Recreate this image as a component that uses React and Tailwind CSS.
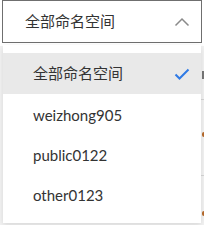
import React from "react";

const font = { fontFamily: 'Lato, "Noto Sans CJK SC", sans-serif' };

export default function App() {
  const items = ["weizhong905", "public0122", "other0123"];
  return (
    <div
      className="relative w-[204px] h-[225px] overflow-hidden bg-[#f3f3f3] text-[#333]"
      style={font}
    >
      {/* background page content peeking out on the right */}
      <div className="absolute right-0 top-[60px] w-[3px] flex flex-col items-end">
        <div className="w-[2px] h-[8px] mt-[11px] bg-[#777]" />
        <div className="w-[3px] h-px mt-[20px] bg-[#d6d6d6]" />
        <div className="w-[2px] h-[5px] mt-[32px] rounded-l-full bg-[#b86a2a]" />
        <div className="w-[3px] h-px mt-[38px] bg-[#d6d6d6]" />
        <div className="w-[2px] h-[5px] mt-[35px] rounded-l-full bg-[#b86a2a]" />
      </div>

      <div className="bg-white pb-[3px]">
        <div className="ml-[2px] w-[200px] h-[43px] border border-[#6f6f6f] bg-white flex items-center justify-between pl-[22px] pr-[11px]">
          <span className="text-[15px] leading-none">全部命名空间</span>
          <svg width="16" height="10" viewBox="0 0 16 10" fill="none">
            <path d="M1.5 8.5L8 2l6.5 6.5" stroke="#8a8a8a" strokeWidth="1.5" />
          </svg>
        </div>
      </div>

      <div className="absolute left-[3px] top-[45px] w-[198px] h-[178px] bg-white shadow-[0_2px_6px_rgba(0,0,0,0.12)] pt-[8px] flex flex-col">
        <div className="h-[41px] bg-[#e9e9e9] flex items-center justify-between pl-[30px] pr-[11px]">
          <span className="text-[15px] leading-none">全部命名空间</span>
          <svg width="16" height="12" viewBox="0 0 16 12" fill="none">
            <path d="M1.5 6.5L5.5 10.5L14.5 1.5" stroke="#2f7ae5" strokeWidth="2" />
          </svg>
        </div>
        {items.map((t) => (
          <div key={t} className="h-[40px] flex items-center pl-[30px] pt-[2px]">
            <span className="text-[15px] leading-none">{t}</span>
          </div>
        ))}
      </div>
    </div>
  );
}
